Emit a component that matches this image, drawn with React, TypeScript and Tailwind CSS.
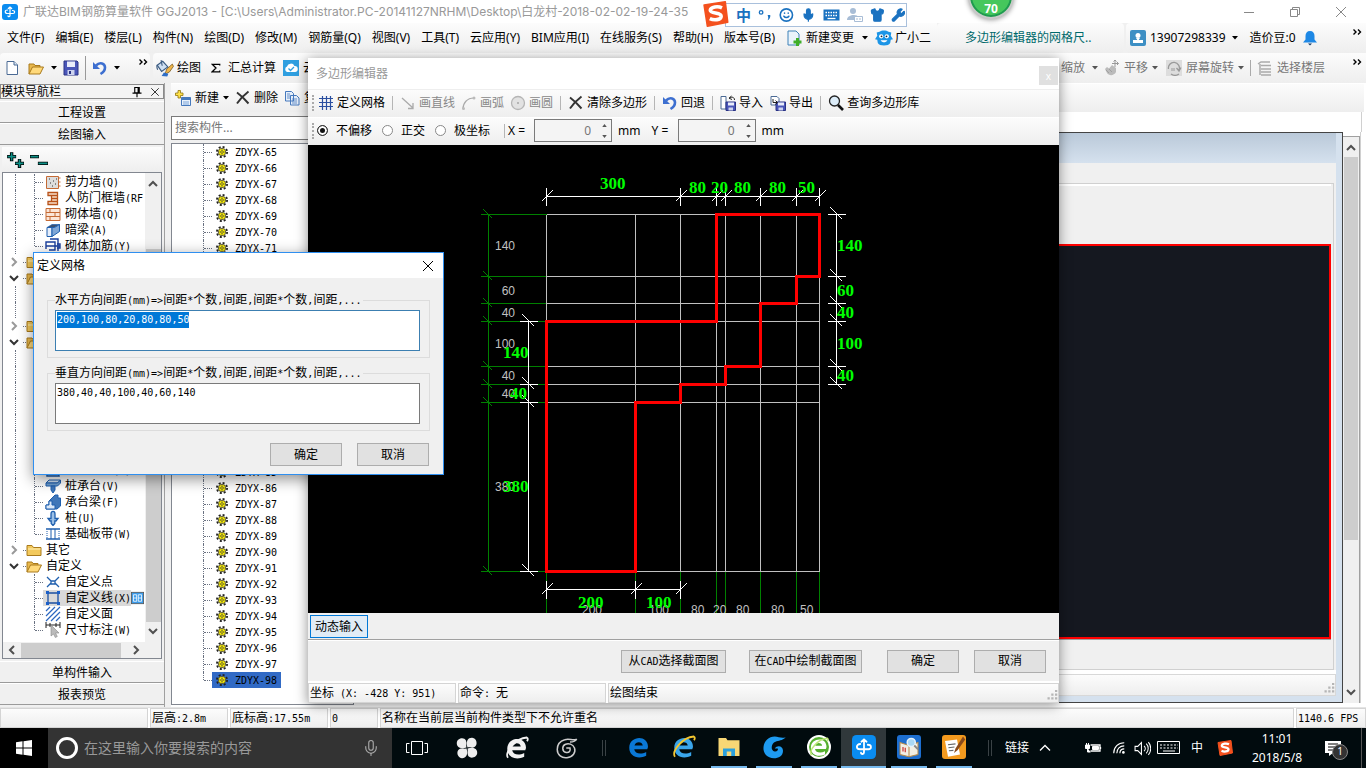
import React, { useEffect, useRef, useState } from "react";
import { Mic, Wrench, Shirt, Smile } from "lucide-react";

type Children = { children?: React.ReactNode };

const bar = "bg-gradient-to-b from-[#fcfcfc] to-[#eeeeee]";
const song = "font-['DejaVu_Sans_Mono','Noto_Sans_CJK_SC',monospace]";

// Song-style label: full-width glyphs are 12px wide, ASCII ones are 6px wide
function Song({ text }: { text: string }) {
  const runs = text.match(/[\x20-\x7e]+|[^\x20-\x7e]+/g) || [];
  return (
    <span className={`${song} whitespace-pre text-xs leading-4`}>
      {runs.map((run, i) =>
        /[\x20-\x7e]/.test(run) ? (
          <span key={i} className="text-[10px]">{run}</span>
        ) : (
          <React.Fragment key={i}>{run}</React.Fragment>
        )
      )}
    </span>
  );
}

function Icon({ children, className = "h-4 w-4" }: Children & { className?: string }) {
  return (
    <svg viewBox="0 0 16 16" className={`shrink-0 ${className}`} fill="none" aria-hidden="true">
      {children}
    </svg>
  );
}

const Caret = ({ color = "#000" }: { color?: string }) => (
  <svg viewBox="0 0 6 4" className="h-1 w-1.5 shrink-0"><path d="M0 0h6L3 3.5z" fill={color} /></svg>
);

const More = () => (
  <svg viewBox="0 0 9 6" className="h-1.5 w-[9px]" fill="none" stroke="#000" strokeWidth="1.4">
    <path d="M.5 .5L3 3 .5 5.5M5 .5L7.500 3 5 5.500" />
  </svg>
);

const Chevron = ({ dir, color = "#505050" }: { dir: "up" | "down" | "left" | "right"; color?: string }) => {
  const d = {
    up: "M1 7l4-4 4 4",
    down: "M1 3l4 4 4-4",
    left: "M7 1L3 5l4 4",
    right: "M3 1l4 4-4 4",
  }[dir];
  return (
    <svg viewBox="0 0 10 10" className="h-2.5 w-2.5 shrink-0" fill="none" stroke={color} strokeWidth="2">
      <path d={d} />
    </svg>
  );
};

const Logo = ({ className }: { className: string }) => (
  <Icon className={className}>
    <rect width="16" height="16" rx="3" fill="#0a8cf0" />
    <path d="M8 3v8.500c0 1.500-2 1.500-2 .3M6.300 4.500L8 3l1.700 1.500M5.500 6C2.500 6 2.500 9.500 5.500 9.500h5.500M10.500 6.500c3 0 2.500 3 .5 3" stroke="#fff" strokeWidth="1.200" strokeLinecap="round" />
  </Icon>
);

const SogouMark = ({ className }: { className: string }) => (
  <Icon className={className}>
    <path d="M1 2.500L14 .5l1.500 12.500L3 15.500z" fill="#f4511e" stroke="#f4511e" strokeLinejoin="round" />
    <path d="M12 4.200C9.500 3 5 3.500 4.800 5.700c0 2.300 7 1 6.700 3.800-.3 2.300-4.500 2.500-7 1.300" stroke="#fff" strokeWidth="2.200" />
  </Icon>
);

const NewDoc = () => (
  <Icon>
    <path d="M3 1.500h7l3.500 3.500v9.500H3z" fill="#fff" stroke="#4b6a94" />
    <path d="M10 1.500V5h3.500" fill="#dbe7f5" stroke="#4b6a94" />
  </Icon>
);
const OpenFolder = ({ className = "h-4 w-[18px]" }: { className?: string }) => (
  <Icon className={className}>
    <path d="M1 14V4h5l1 1.500h5V7" fill="#e9b84c" stroke="#a97a1c" />
    <path d="M1 14l3.500-7H15.500L12 14z" fill="#ffd97a" stroke="#a97a1c" />
  </Icon>
);
const ClosedFolder = () => (
  <Icon>
    <path d="M1 13.500V3.500h5l1.500 2h7.500v8z" fill="#f3c95c" stroke="#a97a1c" />
    <path d="M2 7h12.500" stroke="#fff0b8" />
  </Icon>
);
const Save = () => (
  <Icon>
    <path d="M1 1h13l1 1v13H1z" fill="#4a56b8" stroke="#2a3385" />
    <path d="M4 1.500h8V7H4z" fill="#e9ecfa" />
    <path d="M4.500 10h7v5h-7z" fill="#cdd3ee" />
    <path d="M6 11h2v3H6z" fill="#2a3385" />
  </Icon>
);
const Undo = () => (
  <Icon>
    <path d="M4 5.500c4-4 9-2 9 2 0 3-2 5-4.500 6.500" stroke="#3d6fd0" strokeWidth="2.600" />
    <path d="M1 2v7h7z" fill="#3d6fd0" />
  </Icon>
);
const Cross = () => (
  <Icon>
    <path d="M2 2.500c4 3 8 7 11.500 11M13.500 1.500C9 5 5 9 2 13.500" stroke="#333" strokeWidth="1.900" />
  </Icon>
);
const Bucket = () => (
  <Icon className="h-[18px] w-[18px]">
    <path d="M1 5.500L6 2l4.500 5L5 11z" fill="#cfe0f2" stroke="#3a5a80" />
    <path d="M1 5.500c-.5 1.500 0 3 .5 4M4.500 1l1 5" stroke="#3a5a80" />
    <path d="M14.500 4.500L9.500 9l-1.500 4.500 4-2 3.500-5z" fill="#f0b64a" stroke="#7a5a20" strokeWidth=".7" />
    <path d="M7 12l4 1-1 2.500-5-.5z" fill="#2f6fc8" />
  </Icon>
);
const CloudCheck = () => (
  <Icon>
    <rect width="16" height="16" fill="#2f9fe0" />
    <path d="M4 12a3 3 0 010-5.500A4 4 0 0111.500 6 3 3 0 0112 12z" fill="#fff" />
    <path d="M5.500 8.500l2 2L11 7" stroke="#2f9fe0" strokeWidth="1.300" />
  </Icon>
);
const NewItem = () => (
  <Icon>
    <path d="M6.500 7.500h9v8h-9z" fill="#eaf2fc" stroke="#4679bd" />
    <path d="M6.500 7.500h9v2.500h-9z" fill="#4679bd" />
    <path d="M8 12h6M8 14h6" stroke="#7ba4d8" />
    <path d="M3 .5h2.500V3H8v2.500H5.500V8H3V5.500H.5V3H3z" fill="#ffe24a" stroke="#8f7410" strokeWidth=".8" />
  </Icon>
);
const Copy = () => (
  <Icon>
    <path d="M1.500 1.500h6l2 2v7.500h-8zM6.500 5.500h6l2.500 2.500v7H6.500z" fill="#e6effa" stroke="#4679bd" />
    <path d="M8 9h5M8 11h5M8 13h5M3 4h3M3 6h3M3 8h3" stroke="#4679bd" strokeWidth=".8" />
  </Icon>
);
const Gear = () => (
  <Icon className="h-3 w-3">
    <circle cx="8" cy="8" r="6.800" stroke="#222" strokeWidth="2.400" strokeDasharray="2.700 2.640" />
    <circle cx="8" cy="8" r="5" fill="#fff200" stroke="#333" />
    <path d="M8 3.500v9M3.500 8h9" stroke="#555" strokeWidth=".8" />
    <circle cx="8" cy="8" r="1.700" fill="#fff200" stroke="#333" strokeWidth=".8" />
  </Icon>
);
const DocDisk = ({ out = false }: { out?: boolean }) => (
  <Icon>
    <path d={out ? "M1 1.500h6l2 2V10H1z" : "M1 1.500h5V14H1z"} fill="#fff" stroke="#4b6a94" />
    <path d="M6 7h9.500v8.500H6z" fill="#4a56b8" stroke="#2a3385" />
    <path d="M8 7.500h6v3H8z" fill="#e9ecfa" />
    <path d="M8.500 12.500h4.500v3H8.500z" fill="#cdd3ee" />
    <path d={out ? "M3 4v3.500h4M5.500 5.500l2 2-2 2" : "M14.500 5c0-3-3-3.500-5-2M11.500 1L9 3.200l3 1.300"} stroke="#222" />
  </Icon>
);

/* ---------- top of the main window ---------- */

function TitleBar() {
  return (
    <header className="flex h-[23px] shrink-0 items-center bg-white pl-0.5 text-[#999]">
      <Logo className="h-4 w-4" />
      <h1 className="ml-[5px] whitespace-nowrap font-['Inter','Noto_Sans_CJK_SC',sans-serif] text-xs leading-4">
        广联达BIM钢筋算量软件 GGJ2013 - [C:\Users\Administrator.PC-20141127NRHM\Desktop\白龙村-2018-02-02-19-24-35
      </h1>
      <div className="ml-auto flex items-center gap-[30px] pr-[17px]">
        <button aria-label="最小化"><Icon><path d="M3 8.500h10" stroke="#888" /></Icon></button>
        <button aria-label="还原"><Icon><path d="M3.500 5.500h7v7h-7zM5.500 5V3.500h7v7h-2" stroke="#888" /></Icon></button>
        <button aria-label="关闭"><Icon><path d="M3 3l10 10M13 3L3 13" stroke="#888" /></Icon></button>
      </div>
    </header>
  );
}

const menus = [
  "文件(F)", "编辑(E)", "楼层(L)", "构件(N)", "绘图(D)", "修改(M)", "钢筋量(Q)",
  "视图(V)", "工具(T)", "云应用(Y)", "BIM应用(I)", "在线服务(S)", "帮助(H)", "版本号(B)",
];

function MenuBar() {
  return (
    <nav className="flex h-[30px] shrink-0 items-stretch bg-[#f0f0f0] text-xs leading-4">
      <div className={`flex w-[937px] shrink-0 items-center gap-[11px] overflow-hidden whitespace-nowrap pl-[7px] ${bar}`}>
        {menus.map((m) => (
          <button key={m}>{m}</button>
        ))}
        <button className="flex items-center gap-1">
          <Icon>
            <path d="M2 1h8l3 3v11H2z" fill="#e9f3fb" stroke="#3f82b8" />
            <path d="M10 8h3v2.500h2.500v3H13V16h-3v-2.500H7.500v-3H10z" fill="#3fae2a" />
          </Icon>
          新建变更
          <span className="ml-1"><Caret /></span>
        </button>
        <button className="-ml-1 flex items-center gap-0.5">
          <Icon className="h-[18px] w-[18px]">
            <path d="M1.500 3L4 2.500C6 1 10 1 12 2.500l2.500.5-.5 3 2 3-2 .500-.5 3c-1 3-10 3-11 0l-.5-3L0 9l2-3z" fill="#1c95e6" />
            <circle cx="5.500" cy="6.500" r="1.900" fill="#fff" />
            <circle cx="10.500" cy="6.500" r="1.900" fill="#fff" />
            <circle cx="5.800" cy="6.500" r=".8" fill="#123" />
            <circle cx="10.200" cy="6.500" r=".8" fill="#123" />
            <path d="M5 10c1.500 2.500 4.500 2.500 6 0z" fill="#fff" />
          </Icon>
          广小二
        </button>
      </div>
      <div className={`flex w-[187px] shrink-0 items-center rounded pl-7 text-[#00696b] ${bar}`}>
        <a href="#help">多边形编辑器的网格尺..</a>
      </div>
      <div className={`ml-0.5 flex flex-1 items-center gap-1 rounded-l pl-1 ${bar}`}>
        <Icon>
          <rect width="16" height="16" rx="2" fill="#3d8fc4" />
          <circle cx="8" cy="5.500" r="2.500" fill="#fff" />
          <path d="M3 13V10h10v3zM6 8h4l-2 3z" fill="#fff" />
        </Icon>
        <button className="flex items-center gap-1.5">13907298339 <Caret /></button>
        <span className="ml-2">造价豆:0</span>
        <button aria-label="消息" className="ml-0.5">
          <Icon>
            <path d="M8 1c3 0 4.500 2 4.500 5v3.500L15 12.500H1l2.500-3V6C3.500 3 5 1 8 1z" fill="#1e88e5" />
            <path d="M6 13.500h4L8 15.500z" fill="#123a66" />
          </Icon>
        </button>
        <span className="mb-3 ml-auto mr-1"><More /></span>
      </div>
    </nav>
  );
}

function MainToolbar() {
  return (
    <div className="flex h-[30px] shrink-0 items-stretch bg-[#f0f0f0] text-xs leading-4">
      <div className={`flex w-[150px] shrink-0 items-center rounded pl-1 ${bar}`}>
        <button aria-label="新建"><NewDoc /></button>
        <button aria-label="打开" className="ml-[7px] flex items-center gap-1.5"><OpenFolder /><Caret /></button>
        <button aria-label="保存" className="ml-1.5"><Save /></button>
        <span className="mx-1.5 h-6 w-px bg-[#999]" />
        <button aria-label="撤销" className="flex items-center gap-1.5"><Undo /><Caret /></button>
        <span className="mb-3 ml-auto mr-0.5"><More /></span>
      </div>
      <div className={`ml-[3px] flex flex-1 items-center rounded-l pl-[3px] ${bar}`}>
        <button className="flex items-center gap-[3px]"><Bucket />绘图</button>
        <button className="ml-2.5 flex items-center gap-[7px]">
          <Icon className="h-3.5 w-2.5"><path d="M14 4V2H2l6 6-6 6h12v-2" stroke="#000" strokeWidth="2" /></Icon>
          汇总计算
        </button>
        <button className="ml-[7px] flex items-center gap-1"><CloudCheck />云检查</button>
        <div className="ml-auto flex items-center text-[#777]">
          <button className="flex items-center gap-[7px]">缩放 <Caret color="#555" /></button>
          <button className="ml-1.5 flex items-center gap-1">
            <Icon>
              <path d="M1 9l2-2 2 1.500L8 5l4 3v4c-2 4-7 4-9 1z" fill="#bbb" />
              <path d="M2 10l3 3M5 9l3 3" stroke="#999" strokeWidth=".8" />
              <path d="M11 0v7M8 3.500h6.500M9.500 1.500L11 0l1.500 1.500M13 2l1.500 1.500L13 5" stroke="#999" />
            </Icon>
            平移 <Caret color="#555" />
          </button>
          <button className="ml-2 flex items-center gap-1">
            <Icon>
              <rect width="16" height="16" fill="#ddd" />
              <path d="M2.500 9A5.500 5.500 0 1113 10M13 14a7 7 0 01-8 0M10.500 8l2.500 3 2-3.500" stroke="#999" strokeWidth="1.300" />
              <path d="M5 8h4v3H5z" fill="#bbb" />
            </Icon>
            屏幕旋转 <Caret color="#555" />
          </button>
          <span className="mx-1.5 h-4 w-px bg-[#aaa]" />
          <button className="flex items-center gap-1">
            <Icon>
              <path d="M1 4l3-2h9M4 5.500h10M4 9h10M4 12h10M4 15h10M3 4v11" stroke="#aaa" strokeWidth="1.500" />
            </Icon>
            选择楼层
          </button>
          <span className="mb-3 ml-7 mr-1"><More /></span>
        </div>
      </div>
    </div>
  );
}

/* ---------- module navigation ---------- */

type Leaf = { kind: "leaf"; label: string; icon: React.ReactNode; last?: boolean; selected?: boolean };
type Branch = { kind: "branch"; label: string; open: boolean };
type Row = Leaf | Branch;

const blue = "#1f5fae";
const shapes: Record<string, React.ReactNode> = {
  shear: <><path d="M1.500 2.500h12v12h-12z" fill="#ddd" stroke="#c46a35" /><path d="M4 5h1M8 7h1M5 9h1M10 10h1M7 12h1M11 5h1" stroke="#333" /><path d="M13.500 4h2M13.500 8h2M13.500 12h2" stroke="#c46a35" /></>,
  door: <path d="M3 2.500h9.500v12H3v-3h3.500v-6H3zM6.500 5.500h6M6.500 8.500h6M6.500 11.500h6" fill="#f9e0cc" stroke="#b8521a" strokeWidth="1.300" />,
  brick: <><path d="M1 2.500h14v12H1z" fill="#fbe6d8" stroke="#c46a35" /><path d="M1 6.500h14M1 10.500h14M5 2.500v4M10 6.500v4M5 10.500v4" stroke="#c46a35" /></>,
  beam: <><path d="M2 5.500L7 2.500h7.500l-5 3z" fill="#3a4f70" stroke={blue} strokeWidth=".7" /><path d="M2 5.500h5v9H2z" fill="#e6eefa" stroke={blue} /><path d="M7 5.500h2.500l5-3v7L7 14.500z" fill="#7fa6d6" stroke={blue} /></>,
  rebar: <path d="M1 11V4h9v8H4M5 1h8v12M1 8h14M12 6h3v4h-3" stroke="#1a3f9c" strokeWidth="1.400" />,
  pilecap: <><path d="M1 5l3-3h11.500l-3 3z" fill="#cfe0f3" stroke={blue} /><path d="M1 5h11.500l3-3v3l-3 3H1z" fill="#6f9fd0" stroke={blue} /><path d="M6 8h4v4l-2 3-2-3z" fill="#3f76b8" stroke={blue} /></>,
  capbeam: <><path d="M1 15V11h3V7l6-6h3v3h2.500v8L12 15z" fill="#3f76b8" stroke={blue} /><path d="M1 11h3V7h3v4h3v4H1z" fill="#dbe8f7" stroke={blue} /></>,
  pile: <path d="M6 4c0-3.500 4-3.500 4 0v4.500h3L11 11H9.800v2.500L8 15.500l-1.800-2V11H5L3 8.500h3z" fill="#9cc0e6" stroke={blue} strokeWidth="1.300" />,
  strip: <><path d="M1 3h14M1 13h14" stroke={blue} strokeWidth="1.600" /><path d="M6 3v10M10 3v10" stroke={blue} /><path d="M2 5v7M14 5v7" stroke={blue} strokeDasharray="1 1" /></>,
  point: <path d="M2 3l4 4M14 3l-4 4M2 13l4-4M14 13l-4-4M6 7h4v3H6z" stroke={blue} strokeWidth="1.300" />,
  line: <><path d="M3 3h10v10H3z" stroke="#1b4fa0" strokeWidth="1.300" /><path d="M1 1h3v3H1zM12 1h3v3h-3zM1 12h3v3H1zM12 12h3v3h-3z" fill="#1b5fc8" /></>,
  face: <path d="M1 5l4-4M1 10l9-9M1 15L15 1M6 15l9-9M11 15l4-4" stroke="#2a66c0" strokeWidth="1.200" />,
  dim: <><path d="M1 3h14M1 0v6M15 0v6M5 1v4M11 1v4" stroke="#222" /><path d="M6 3v11l2.500-2 1.800 3.500 2-1L10.500 11H14z" fill="#bbb" stroke="#888" strokeWidth=".6" /></>,
  base: <path d="M2 12V5h10l2 9H2z" fill="#d5e4f5" stroke={blue} strokeWidth="1.500" />,
};

const leaf = (label: string, shape: string, extra: Partial<Leaf> = {}): Leaf => ({
  kind: "leaf", label, icon: <Icon>{shapes[shape]}</Icon>, ...extra,
});

const navRows: Row[] = [
  leaf("剪力墙(Q)", "shear"),
  leaf("人防门框墙(RF", "door"),
  leaf("砌体墙(Q)", "brick"),
  leaf("暗梁(A)", "beam"),
  leaf("砌体加筋(Y)", "rebar", { last: true }),
  { kind: "branch", label: "", open: false },
  { kind: "branch", label: "", open: true },
  leaf("", "beam"),
  leaf("", "beam", { last: true }),
  { kind: "branch", label: "", open: false },
  { kind: "branch", label: "", open: true },
  leaf("", "beam"),
  leaf("", "base"),
  leaf("", "strip"),
  leaf("", "strip"),
  leaf("", "base"),
  leaf("", "pile"),
  leaf("", "base"),
  leaf("条形基础(T)", "base"),
  leaf("桩承台(V)", "pilecap"),
  leaf("承台梁(F)", "capbeam"),
  leaf("桩(U)", "pile"),
  leaf("基础板带(W)", "strip", { last: true }),
  { kind: "branch", label: "其它", open: false },
  { kind: "branch", label: "自定义", open: true },
  leaf("自定义点", "point"),
  leaf("自定义线(X)", "line", { selected: true }),
  leaf("自定义面", "face"),
  leaf("尺寸标注(W)", "dim", { last: true }),
];
const lastBranch = 24;

function NavRow({ row, index }: { row: Row; index: number }) {
  if (row.kind === "branch") {
    return (
      <li className="flex h-4 shrink-0 items-center whitespace-nowrap pl-1.5">
        <Chevron dir={row.open ? "down" : "right"} color={row.open ? "#333" : "#999"} />
        <span className="ml-1 w-[3px] border-t border-dotted border-gray-500" />
        {row.open ? <OpenFolder className="h-4 w-4" /> : <ClosedFolder />}
        <span className="ml-1"><Song text={row.label} /></span>
      </li>
    );
  }
  return (
    <li className="flex h-4 shrink-0 items-center whitespace-nowrap pl-3">
      <span className={`h-4 w-[19px] shrink-0 ${index < lastBranch ? "border-l border-dotted border-gray-500" : ""}`} />
      <span className={`${row.last ? "mb-2 h-2" : "h-4"} w-0 shrink-0 border-l border-dotted border-gray-500`} />
      <span className="w-2 shrink-0 border-t border-dotted border-gray-500" />
      <span className={`flex h-4 items-center gap-1 pl-0.5 ${row.selected ? "bg-[#d9d9d9]" : ""}`}>
        {row.icon}
        <Song text={row.label} />
      </span>
      {row.selected && (
        <Icon className="h-4 w-[13px]">
          <rect x=".5" y="1" width="15" height="14" fill="#3b9bea" stroke="#555" />
          <path d="M3 4h4v8H3zM9 4h4v8H9zM3 8h4M9 8h4" stroke="#fff" />
        </Icon>
      )}
    </li>
  );
}

function NavButton({ children }: Children) {
  return (
    <button className="h-[22px] w-full shrink-0 border-b border-t border-b-[#9a9a9a] border-t-white bg-[#f0f0f0] pt-0.5">
      {children}
    </button>
  );
}

function NavPanel() {
  return (
    <aside className="flex w-[165px] shrink-0 flex-col border-r border-[#a0a0a0] bg-[#f0f0f0] pb-0.5 pt-px text-xs leading-4">
      <div className="flex h-[15px] shrink-0 items-center border border-[#8a8a8a] bg-[#f4f4f4]">
        <h2><Song text="模块导航栏" /></h2>
        <button aria-label="固定" className="ml-auto"><Icon className="h-3 w-3"><path d="M5 2h6v7H5zM9.500 2v7M2 9.500h12M8 10v5" stroke="#000" strokeWidth="1.500" /></Icon></button>
        <button aria-label="关闭面板" className="ml-1.5 mr-0.5"><Icon className="h-3 w-3"><path d="M3 3l10 10M13 3L3 13" stroke="#222" strokeWidth="1.200" /></Icon></button>
      </div>
      <div className="h-0.5 shrink-0" />
      <NavButton><Song text="工程设置" /></NavButton>
      <NavButton><Song text="绘图输入" /></NavButton>
      <div className={`mx-0.5 mt-0.5 flex h-[25px] shrink-0 items-center gap-1.5 pl-1 ${bar}`}>
        <button aria-label="全部展开">
          <Icon className="h-[18px] w-[18px]"><path d="M5 1v8M1 5h8M12 7v8M8 11h8" stroke="#000" strokeWidth="3" /><path d="M5 1.500v7M1.500 5h7M12 7.500v7M8.500 11h7" stroke="#0d8f86" strokeWidth="1.400" /></Icon>
        </button>
        <button aria-label="全部折叠">
          <Icon className="h-[18px] w-[18px]"><path d="M0 5h8M7 11h9" stroke="#000" strokeWidth="3" /><path d="M.5 5h7M7.500 11h8" stroke="#0d8f86" strokeWidth="1.400" /></Icon>
        </button>
      </div>
      <div className="mx-0.5 flex min-h-0 flex-1 flex-col border border-[#828790] bg-white">
        <div className="flex min-h-0 flex-1">
          <ul className="flex min-w-0 flex-1 flex-col overflow-hidden pt-px">
            {navRows.map((row, i) => (
              <NavRow key={i} row={row} index={i} />
            ))}
          </ul>
          <div className="flex w-4 shrink-0 flex-col items-center bg-[#f0f0f0] py-1.5">
            <Chevron dir="up" />
            <span className="mb-1 mt-[60px] w-[15px] flex-1 bg-[#cdcdcd]" />
            <Chevron dir="down" />
          </div>
        </div>
        <div className="flex h-4 shrink-0 items-center bg-[#f0f0f0] pl-1 pr-5">
          <Chevron dir="left" />
          <span className="ml-1 mr-2.5 h-[15px] flex-1 bg-[#cdcdcd]" />
          <Chevron dir="right" />
        </div>
      </div>
      <div className="h-0.5 shrink-0" />
      <NavButton><Song text="单构件输入" /></NavButton>
      <NavButton><Song text="报表预览" /></NavButton>
    </aside>
  );
}

/* ---------- component list ---------- */

const components = Array.from({ length: 34 }, (_, i) => `ZDYX-${65 + i}`);

function ComponentPanel() {
  return (
    <section className="ml-1.5 flex w-[183px] shrink-0 flex-col bg-white pb-0.5 pt-px text-xs leading-4">
      <div className={`flex h-7 shrink-0 items-center overflow-hidden whitespace-nowrap pl-1 ${bar}`}>
        <button className="flex items-center gap-1"><NewItem />新建<Caret /></button>
        <button className="ml-1.5 flex items-center gap-[3px]"><Cross />删除</button>
        <button className="ml-1.5 flex items-center gap-1"><Copy />复制</button>
      </div>
      <div className="bg-[#f0f0f0] pb-[3px] pt-1">
        <input
          aria-label="搜索构件"
          placeholder="搜索构件..."
          className="block h-6 w-full border border-[#7a7a7a] bg-white px-[3px] pb-0.5 leading-4 placeholder:text-[#777]"
        />
      </div>
      <ul className="flex-1 border border-[#828790] pl-[31px]">
        {components.map((name, i) => {
          const last = i === components.length - 1;
          return (
            <li key={name} className="flex h-4 items-center">
              <span className={`${last ? "mb-2 h-2" : "h-4"} border-l border-dotted border-gray-500`} />
              <span className="w-2 border-t border-dotted border-gray-500" />
              <span className={`flex h-4 items-center gap-[7px] pl-1 pr-1 ${last ? "bg-[#316ac5]" : ""}`}>
                <Gear />
                <Song text={name} />
              </span>
            </li>
          );
        })}
      </ul>
    </section>
  );
}

/* ---------- drawing area behind the editor ---------- */

const Grip = () => (
  <Icon className="h-3 w-3">
    <path d="M12 1h3M12 6h3M12 11h3M7 6h3M7 11h3M2 11h3" stroke="#b5b5b5" strokeWidth="3" />
  </Icon>
);

function DrawingArea() {
  return (
    <section className="flex min-w-0 flex-1 flex-col bg-white pb-1 pt-px">
      <div className={`mr-0.5 h-7 shrink-0 ${bar}`} />
      <div className="mr-1 h-5 shrink-0 border-r border-[#d0d0d0]" />
      <div className="mr-[5px] flex min-h-0 flex-1 border-r border-[#d0d0d0]">
        <div className="flex min-w-0 flex-1 flex-col border border-[#444] bg-[#d5e1ee] pb-1.5 pr-1.5">
          <div className="h-[30px] shrink-0 bg-gradient-to-b from-[#bac9d9] to-[#d5e1ee]" />
          <div className="flex min-h-0 flex-1 flex-col bg-[#f0f0f0]">
            <div className="h-5 shrink-0" />
            <div className="mr-0.5 flex min-h-0 flex-1 flex-col border border-[#d0d0d0] pr-0.5">
              <div className="h-[60px] shrink-0 border-t-2 border-white" />
              <div className="flex-1 border-2 border-[#ff0000] bg-[#151820]" />
              <div className="h-[30px] shrink-0 border-t border-[#a0a0a0]" />
            </div>
            <div className="h-1 shrink-0 bg-white" />
            <div className={`flex h-[22px] shrink-0 items-end justify-end border border-[#d8d8d8] ${bar}`}><Grip /></div>
          </div>
        </div>
        <div className="mt-1 flex w-[17px] shrink-0 flex-col items-center border-r border-t border-[#a0a0a0] bg-[#f0f0f0] py-1.5">
          <Chevron dir="up" />
          <span className="mt-1 h-[383px] w-3.5 bg-[#cdcdcd]" />
          <span className="mt-auto"><Chevron dir="down" /></span>
        </div>
      </div>
    </section>
  );
}

function StatusBar() {
  const cell = `flex items-center border border-[#d4d4d4] pl-px ${bar}`;
  return (
    <footer className="flex h-[21px] shrink-0 gap-0.5 border-t border-[#e4e4e4] bg-white">
      <div className={`w-[148px] ${cell}`} />
      <div className={`w-[78px] ${cell}`}><Song text="层高:2.8m" /></div>
      <div className={`w-[98px] ${cell}`}><Song text="底标高:17.55m" /></div>
      <div className={`w-12 ${cell}`}><Song text="0" /></div>
      <div className={`flex-1 ${cell}`}><Song text="名称在当前层当前构件类型下不允许重名" /></div>
      <div className={`w-[70px] ${cell}`}><Song text="1140.6 FPS" /></div>
    </footer>
  );
}

/* ---------- polygon editor ---------- */

const gx = [238, 327, 372, 408, 417, 452, 488, 511];
const gy = [69, 131, 158, 176, 221, 239, 257, 426];
const outline =
  "M408 69H511V131H488V158H452V221H417V239H372V257H327V426H238V176H408Z";

const sizesLeft: [string, number][] = [
  ["140", 105], ["60", 150], ["40", 172], ["100", 203], ["40", 235], ["40", 253], ["380", 346],
];
const sizesBottom: [string, number][] = [
  ["200", 274], ["100", 341], ["80", 383], ["20", 405], ["80", 428], ["80", 463], ["50", 492],
];
const marks: [string, number, number][] = [
  ["300", 292, 44], ["80", 381, 48], ["20", 403, 48], ["80", 426, 48], ["80", 461, 48], ["50", 490, 48],
  ["140", 195, 213], ["40", 202, 254], ["380", 195, 347],
  ["140", 529, 106], ["60", 529, 151], ["40", 529, 173], ["100", 529, 204], ["40", 529, 236],
  ["200", 270, 463], ["100", 338, 463],
];

const hTicks = (xs: number[], y: number) =>
  xs.map((x) => `M${x} ${y - 9}v18M${x - 5} ${y + 5}l11 -11`).join("");
const vTicks = (ys: number[], x: number) =>
  ys.map((y) => `M${x - 9} ${y}h18M${x - 6} ${y - 7}l12 12`).join("");

function SectionCanvas() {
  return (
    <div className="flex-1 overflow-hidden bg-black">
      <svg width="751" height="468" viewBox="0 0 751 468" fill="none" role="img" aria-label="截面网格">
        <g transform="translate(.5 .5)" shapeRendering="crispEdges">
          <path
            stroke="#008000"
            d={
              "M180 69V426" +
              gy.map((y) => `M172 ${y}H238M175 ${y - 5}l9 9`).join("") +
              gx.map((x) => `M${x} 426V468`).join("")
            }
          />
          <path
            stroke="#c0c0c0"
            d={gx.map((x) => `M${x} 69V426`).join("") + gy.map((y) => `M238 ${y}H511`).join("")}
          />
          <path d={outline} stroke="#ff0000" strokeWidth="3" />
          <path
            stroke="#fff"
            d={
              "M238 51H511M220 176V426M528 69V239M238 444H372" +
              hTicks([238, 372, 408, 417, 452, 488, 511], 51) +
              hTicks([238, 327, 372], 444) +
              vTicks([176, 239, 257, 426], 220) +
              vTicks([69, 131, 158, 176, 221, 239], 528)
            }
          />
        </g>
        <g fill="#c0c0c0" className="font-['Liberation_Sans',sans-serif] text-xs">
          {sizesLeft.map(([t, y]) => (
            <text key={y} x="207" y={y} textAnchor="end">{t}</text>
          ))}
          {sizesBottom.map(([t, x]) => (
            <text key={x} x={x} y="469">{t}</text>
          ))}
        </g>
        <g fill="#00ff00" className="font-['Liberation_Serif',serif] text-[17px] font-bold">
          {marks.map(([t, x, y]) => (
            <text key={`${x}-${y}`} x={x} y={y}>{t}</text>
          ))}
        </g>
      </svg>
    </div>
  );
}

const Dots = () => <span className="h-4 w-0.5 shrink-0 border-l-2 border-dotted border-[#aaa]" />;
const Sep = () => <span className="h-3.5 w-px shrink-0 bg-[#b5b5b5]" />;

function Tool({ icon, label, muted }: { icon: React.ReactNode; label: string; muted?: boolean }) {
  return (
    <button className={`flex items-center gap-[3px] ${muted ? "text-[#888]" : ""}`}>
      {icon}
      {label}
    </button>
  );
}

function Coord({ axis }: { axis: string }) {
  return (
    <label className="flex items-center gap-1.5">
      <span className="w-5">{axis} =</span>
      <span className="flex h-[23px] w-[78px] items-center border border-[#7a7a7a] bg-[#f4f4f4] pr-1">
        <input defaultValue="0" className="w-full min-w-0 bg-transparent pr-[11px] text-right text-[#777]" />
        <span className="flex flex-col gap-2">
          <svg viewBox="0 0 6 4" className="h-[3px] w-[5px]"><path d="M0 4h6L3 0z" fill="#555" /></svg>
          <svg viewBox="0 0 6 4" className="h-[3px] w-[5px]"><path d="M0 0h6L3 4z" fill="#555" /></svg>
        </span>
      </span>
      <span>mm</span>
    </label>
  );
}

function PushButton({ label, className }: { label: string; className: string }) {
  return (
    <button className={`h-[23px] border border-[#adadad] bg-[#e1e1e1] text-xs leading-4 ${className}`}>
      <Song text={label} />
    </button>
  );
}

const modes = ["不偏移", "正交", "极坐标"];

function PolygonEditor() {
  const [mode, setMode] = useState("不偏移");
  const cell = `flex items-center border border-[#d4d4d4] pl-px ${bar}`;
  return (
    <section className="absolute left-[308px] top-[58px] flex h-[645px] w-[751px] flex-col bg-[#f0f0f0] text-xs leading-4 shadow-[0_2px_12px_rgba(0,0,0,0.45)]">
      <header className="flex h-[31px] shrink-0 items-center bg-white pl-2 text-[#999]">
        <h2>多边形编辑器</h2>
        <button aria-label="关闭编辑器" className="ml-auto mr-px mt-1 h-[19px] w-[19px] bg-[#e0e0e0] text-[10px] text-white">x</button>
      </header>
      <div className={`flex h-7 shrink-0 items-center whitespace-nowrap border-t border-[#eee] pb-0.5 pl-1 ${bar}`}>
        <Dots />
        <div className="ml-1 flex items-center gap-[7px]">
          <Tool label="定义网格" icon={<Icon><path d="M4.500 1v14M8.500 1v14M12.500 1v14M1 3.500h14M1 7.500h14M1 11.500h14" stroke="#2b4fa0" strokeWidth="1.200" /></Icon>} />
          <Sep />
          <div className="flex gap-1.5">
            <Tool muted label="画直线" icon={<Icon><path d="M2 3l11 10M13 8v5.500H8" stroke="#aaa" strokeWidth="1.300" /></Icon>} />
            <Tool muted label="画弧" icon={<Icon><path d="M2 14C2 8 6 3 13 3" stroke="#aaa" strokeWidth="1.200" /><circle cx="2.500" cy="13.500" r="1.500" fill="#bbb" /><circle cx="13" cy="3" r="1.500" fill="#bbb" /></Icon>} />
            <Tool muted label="画圆" icon={<Icon><circle cx="8" cy="8" r="6.500" fill="#e2e2e2" stroke="#b5b5b5" strokeWidth="1.300" /><path d="M7 8h2" stroke="#888" /></Icon>} />
          </div>
          <Sep />
          <Tool label="清除多边形" icon={<Cross />} />
          <Sep />
          <Tool label="回退" icon={<Undo />} />
          <Sep />
          <Tool label="导入" icon={<DocDisk />} />
          <Tool label="导出" icon={<DocDisk out />} />
          <Sep />
          <Tool label="查询多边形库" icon={<Icon><circle cx="6.500" cy="6" r="5" fill="#dcecf8" stroke="#222" strokeWidth="1.300" /><path d="M10 10l5 5" stroke="#111" strokeWidth="2.600" /></Icon>} />
        </div>
      </div>
      <div className={`flex h-7 shrink-0 items-center whitespace-nowrap border-t border-white pb-0.5 pl-1 ${bar}`}>
        <Dots />
        <div className="ml-[3px] flex items-center gap-2.5">
          {modes.map((m) => (
            <label key={m} className="flex items-center gap-2">
              <input
                type="radio"
                name="offset-mode"
                checked={mode === m}
                onChange={() => setMode(m)}
                className="h-[11px] w-[11px] appearance-none rounded-full border border-[#888] bg-white checked:border-[#333] checked:bg-[#111] checked:shadow-[inset_0_0_0_2px_white]"
              />
              <Song text={m} />
            </label>
          ))}
        </div>
        <div className="ml-3.5 flex items-center gap-[3px]">
          <Sep />
          <Coord axis="X" />
          <span className="ml-2"><Coord axis="Y" /></span>
        </div>
      </div>
      <SectionCanvas />
      <div className="h-[27px] shrink-0 border-b border-[#a0a0a0] pl-0.5 pt-0.5">
        <button className="h-[23px] w-[58px] border border-[#0078d7] bg-[#e1ecf6]">动态输入</button>
      </div>
      <div className="flex h-[41px] shrink-0 items-center justify-end border-t border-white pr-[13px]">
        <PushButton label="从CAD选择截面图" className="w-[105px]" />
        <PushButton label="在CAD中绘制截面图" className="ml-[23px] w-[113px]" />
        <PushButton label="确定" className="ml-[25px] w-[72px]" />
        <PushButton label="取消" className="ml-[15px] w-[72px]" />
      </div>
      <footer className="flex h-[22px] shrink-0 gap-0.5 bg-white pt-0.5">
        <div className={`w-[148px] ${cell}`}><Song text="坐标 (X: -428 Y: 951)" /></div>
        <div className={`w-[148px] ${cell}`}><Song text="命令: 无" /></div>
        <div className={`flex-1 ${cell}`}>
          <Song text="绘图结束" />
          <span className="ml-auto self-end"><Grip /></span>
        </div>
      </footer>
    </section>
  );
}

/* ---------- grid definition dialog ---------- */

function GridDialog() {
  const first = useRef<HTMLTextAreaElement>(null);

  useEffect(() => {
    first.current?.focus();
    first.current?.select();
  }, []);

  const box = `${song} mt-px block h-[41px] w-full resize-none border bg-white px-px py-px text-[10px] leading-4 outline-none selection:bg-[#0078d7] selection:text-white`;
  return (
    <section
      role="dialog"
      aria-label="定义网格"
      className="absolute left-[33px] top-[252px] flex h-[223px] w-[411px] flex-col border border-[#2f8ff0] bg-[#f0f0f0] text-xs leading-4 shadow-[0_4px_14px_rgba(0,0,0,0.45)]"
    >
      <header className="flex h-[25px] shrink-0 items-center bg-white pl-[3px]">
        <h2>定义网格</h2>
        <button aria-label="关闭对话框" className="ml-auto mr-[7px]"><Icon><path d="M3 3l10 10M13 3L3 13" stroke="#000" /></Icon></button>
      </header>
      <div className="flex flex-1 flex-col px-[13px] pt-[14px]">
        <fieldset className="h-[66px] border border-[#dcdcdc] pl-[7px] pr-[9px]">
          <legend className="whitespace-nowrap pr-0.5">
            <label htmlFor="grid-h"><Song text="水平方向间距(mm)=>间距*个数,间距,间距*个数,间距,..." /></label>
          </legend>
          <textarea id="grid-h" ref={first} spellCheck={false} defaultValue="200,100,80,20,80,80,50" className={`${box} border-[#3c7fb1]`} />
        </fieldset>
        <fieldset className="mt-[7px] h-[66px] border border-[#dcdcdc] pl-[7px] pr-[9px]">
          <legend className="whitespace-nowrap pr-0.5">
            <label htmlFor="grid-v"><Song text="垂直方向间距(mm)=>间距*个数,间距,间距*个数,间距,..." /></label>
          </legend>
          <textarea id="grid-v" spellCheck={false} defaultValue="380,40,40,100,40,60,140" className={`${box} border-[#7a7a7a]`} />
        </fieldset>
        <div className="mt-3 flex justify-end gap-[15px] pr-px">
          <PushButton label="确定" className="w-[72px]" />
          <PushButton label="取消" className="w-[72px]" />
        </div>
      </div>
    </section>
  );
}

/* ---------- floating widgets ---------- */

function InputMethodBar() {
  return (
    <div className="absolute left-[702px] top-0 flex h-[27px] items-center">
      <SogouMark className="z-10 h-[26px] w-[27px]" />
      <div className="-ml-1 mt-[3px] flex h-[24px] w-[182px] items-center gap-[7px] border border-[#a9c0dc] bg-white pl-2.5 text-[#1b72c0]">
        <span className="text-[15px] font-bold leading-4">中</span>
        <Icon className="h-3.5 w-3.5"><circle cx="3.500" cy="5" r="2" stroke="currentColor" strokeWidth="1.500" /><path d="M11 8h3c.5 3-1 5-3 6 1-2 1-3 0-6z" fill="currentColor" /></Icon>
        <Smile className="h-4 w-4" strokeWidth={2.6} />
        <Mic className="h-4 w-4 fill-current" />
        <Icon className="h-4 w-[17px]"><rect y="2.500" width="16" height="11" fill="currentColor" /><path d="M2 5.500h12M2 8.500h12" stroke="#fff" strokeWidth="1.500" strokeDasharray="1.500 1" /><path d="M4 11.500h8" stroke="#fff" strokeWidth="1.300" /></Icon>
        <Icon className="h-4 w-4 text-[#a8bdd6]"><circle cx="6" cy="4" r="3" fill="currentColor" /><path d="M0 13c0-6 11-6 11-3H7v3z" fill="currentColor" /><path d="M7.500 9.500h8v5h-8zM9 12h2M12 12h2" stroke="currentColor" /></Icon>
        <Shirt className="h-4 w-4 fill-current" />
        <Wrench className="h-4 w-4 fill-current" />
      </div>
    </div>
  );
}

function SpeedBall() {
  return (
    <div className="absolute left-[968px] top-[-27px] flex h-[46px] w-[46px] items-end justify-center rounded-full border-2 border-[#c9c9c9] bg-[#45c75c] text-xs font-bold text-white shadow-[0_1px_5px_rgba(0,0,0,0.4),inset_0_0_0_2px_#1f9a50]">
      <span>70</span>
    </div>
  );
}

/* ---------- taskbar ---------- */

const BrowserE = ({ fill, swoosh, className = "h-6 w-6" }: { fill: string; swoosh?: string; className?: string }) => (
  <Icon className={className}>
    <path d="M13.500 9.500H4.800c.4 3 4.500 3.700 8 1.800v2.600C7 16.500 1.500 14 1.500 8.500c0-8 12.500-9 12.500-.5zM5 7h5.500C10.300 4 5.500 4 5 7z" fill={fill} />
    {swoosh && <path d="M2 14.500C-.5 11 7 1.500 14.500 1c1 .5.800 1.500.2 2.500" stroke={swoosh} strokeWidth="1.200" />}
  </Icon>
);

const pinned: React.ReactNode[] = [
  <svg viewBox="0 0 22 16" className="h-4 w-[22px]" fill="none" stroke="#fff"><path d="M5.500 1.500h11v13h-11zM3.500 3.500h-3v9h3M18.500 3.500h3v9h-3" /></svg>,
  <Icon className="h-6 w-6">
    <path d="M7.600 7.700C3 9 1 7 1.200 4.500 1.500 1.500 6 .5 7.300 3c.7 1.500 0 3 .3 4.700zM8.300 7.600C7 3 9 1 11.500 1.200c3 .3 4 4.800 1.500 6.100-1.500.7-3 0-4.700.3zM8.400 8.300C13 7 15 9 14.800 11.500c-.3 3-4.800 4-6.100 1.500-.7-1.500 0-3-.3-4.700zM7.700 8.400C9 13 7 15 4.500 14.800c-3-.3-4-4.800-1.500-6.100 1.500-.7 3 0 4.700-.3z" fill="#eee" />
  </Icon>,
  <BrowserE fill="#f2f2f2" swoosh="#f2f2f2" />,
  <Icon className="h-6 w-6">
    <path d="M14.500 2c-2 1.500-5-.5-8 .5C3 3.500 1.500 6 1.500 9c0 3.500 3 6 6.500 5.500 4-.5 6-3.500 5-6.500-1-2.500-4-3.500-6-2.500-2.500 1-2.500 5 .5 5.500 2 .3 3-1 2.500-3H7.500M14.500 2c-1 2-2.500 2-4.500 2" stroke="#ccc" />
  </Icon>,
];

const running: { icon: React.ReactNode; on?: boolean; active?: boolean }[] = [
  { icon: <BrowserE fill="#0a78d6" /> },
  { icon: <BrowserE fill="#3aa5ea" swoosh="#f3c62f" /> },
  { icon: <Icon className="h-6 w-6"><path d="M1 2h5l1 1.500h8V14H1z" fill="#f8d775" /><path d="M4 14V9h8v5h-2.500v-3h-3v3z" fill="#2ba0dc" /></Icon>, on: true },
  {
    icon: (
      <Icon className="h-6 w-6">
        <path d="M15.800 1.500C13.500 4 11 3.500 9 4.500c-3 1-3.500 6-.5 6.500 1.500.2 2.500-1 2-2H8.500c1.500-2.500 5.500-2 5.500 1.500 0 3.500-3 5-6 5-4.500 0-7.500-3.500-7-7.500C1.500 4 4.500 1 8.500 1c2.500 0 4.500 1.500 7.300.5z" fill="#1e9bf0" />
      </Icon>
    ),
    on: true,
  },
  {
    icon: (
      <span className="flex h-6 w-6 items-center justify-center rounded-full border-2 border-white bg-[#56b030]">
        <BrowserE fill="#fff" swoosh="#bfe87a" className="h-5 w-5" />
      </span>
    ),
    on: true,
  },
  { icon: <Logo className="h-6 w-6" />, on: true, active: true },
  { icon: <Icon className="h-6 w-6"><rect width="16" height="16" rx="2" fill="#1d6fd0" /><path d="M2 5l6 2 6-2v8l-6 1.500L2 13z" fill="#f2efe4" stroke="#b58a4a" strokeWidth=".7" /><path d="M8 7v7" stroke="#b58a4a" strokeWidth=".7" /><circle cx="9.500" cy="5" r="2.700" fill="#a9d8f5" stroke="#e6f3fc" /><path d="M11.500 7l2.500 2.500" stroke="#888" strokeWidth="1.200" /><path d="M4 8v3M5.500 8.500v3" stroke="#c33" strokeWidth=".8" /></Icon>, on: true },
  { icon: <Icon className="h-6 w-6"><rect width="16" height="16" rx="2" fill="#f39a1e" /><path d="M2 4l8-1 2 10-8 1.500z" fill="#fff" /><path d="M4 6.500l5-.6M4.300 8.500l4-.5M4.600 10.500l3-.3" stroke="#666" strokeWidth=".8" /><path d="M14 1L9 9l-1 3 2.500-2L15.500 3z" fill="#8a4a1a" /></Icon>, on: true },
];

function Taskbar() {
  return (
    <div className="flex h-10 shrink-0 items-stretch bg-[#010b0e] text-xs text-white">
      <button aria-label="开始" className="flex w-12 items-center justify-center bg-black">
        <Icon><path d="M0 2.300l6.500-1v6.200H0zM7.500 1.200L16 0v7.500H7.500zM0 8.500h6.500v6.200l-6.500-1zM7.500 8.500H16V16l-8.500-1.200z" fill="#fff" /></Icon>
      </button>
      <label className="flex w-[344px] shrink-0 items-center bg-[#333] pl-2 pr-3">
        <span className="h-[22px] w-[22px] rounded-full border-[3px] border-white" />
        <input aria-label="搜索" placeholder="在这里输入你要搜索的内容" className="ml-1.5 flex-1 bg-transparent text-sm placeholder:text-[#999]" />
        <Mic className="h-[18px] w-[18px] text-[#aaa]" strokeWidth={1.5} />
      </label>
      {pinned.map((icon, i) => (
        <button key={i} className="flex w-[50px] items-center justify-center">{icon}</button>
      ))}
      <span className="mx-2.5 my-3 w-1 border-x border-[#3a4245]" />
      {running.map(({ icon, on, active }, i) => (
        <button key={i} className={`flex w-[45px] flex-col items-center justify-end ${active ? "bg-[#30383b]" : ""}`}>
          <span className="flex h-[38px] items-center">{icon}</span>
          <span className={`h-0.5 ${active ? "w-full" : "w-9"} ${on ? "bg-[#76b9ed]" : ""}`} />
        </button>
      ))}
      <span className="my-3 ml-3 w-1 border-x border-[#3a4245]" />
      <div className="ml-auto flex items-center">
        <span>链接</span>
        <Icon className="ml-2 h-4 w-4"><path d="M3 10.500l5-5 5 5" stroke="#fff" strokeWidth="1.300" /></Icon>
        <Icon className="ml-8 h-4 w-[17px]"><path d="M5 5h9.500v6H5M15 7v2" stroke="#fff" strokeWidth="1.300" /><path d="M7 6.500h6v3H7zM0 5h4v3.500H0zM1 3v2M3 3v2M2 8v4h3" fill="#fff" stroke="#fff" /></Icon>
        <Icon className="ml-2.5 h-3.5 w-3.5"><path d="M2 14C2 7 7 2 14 2M5.500 14C5.500 9 9 5.500 14 5.500M9 14c0-3 2-5 5-5" stroke="#fff" strokeWidth="1.300" /><circle cx="13" cy="13" r="1.500" fill="#fff" /></Icon>
        <Icon className="ml-2 h-[17px] w-[17px]"><path d="M1 6h2.500L7 2.500v11L3.500 10H1zM9.500 5.500c1.500 1.500 1.500 3.500 0 5M11.500 3.500c2.500 2.500 2.500 6.500 0 9M13.500 2c3 3.500 3 8.500 0 12" stroke="#fff" /></Icon>
        <svg viewBox="0 0 24 14" className="ml-1.5 h-3.5 w-6" fill="none" stroke="#fff"><path d="M.5 .5h22v12H.5z" /><path d="M3 4h18M3 7h18" strokeDasharray="2 1.500" /><path d="M6 10h12" /></svg>
        <span className="ml-2.5">中</span>
        <SogouMark className="ml-3.5 h-4 w-4" />
        <time className="ml-4 w-[56px] text-center leading-[19px]">11:01<br />2018/5/8</time>
        <button aria-label="通知" className="relative ml-5 h-6 w-6">
          <Icon><path d="M0 1h16v12H8l-4 3v-3H0z" fill="#fff" /><path d="M3 4h10M3 7h10M3 10h6" stroke="#000" /></Icon>
          <span className="absolute left-[7px] top-2 flex h-4 w-4 items-center justify-center rounded-full border border-[#888] bg-[#333] text-[10px]">1</span>
        </button>
        <span className="ml-3 h-10 w-px bg-[#555]" />
        <span className="w-1 bg-black" />
      </div>
    </div>
  );
}

export default function App() {
  return (
    <div className="relative flex h-screen flex-col overflow-hidden bg-[#f0f0f0] font-['Noto_Sans','Noto_Sans_CJK_SC',sans-serif] text-black">
      <TitleBar />
      <MenuBar />
      <MainToolbar />
      <main className="flex min-h-0 flex-1">
        <NavPanel />
        <ComponentPanel />
        <DrawingArea />
      </main>
      <StatusBar />
      <Taskbar />
      <PolygonEditor />
      <GridDialog />
      <InputMethodBar />
      <SpeedBall />
    </div>
  );
}
